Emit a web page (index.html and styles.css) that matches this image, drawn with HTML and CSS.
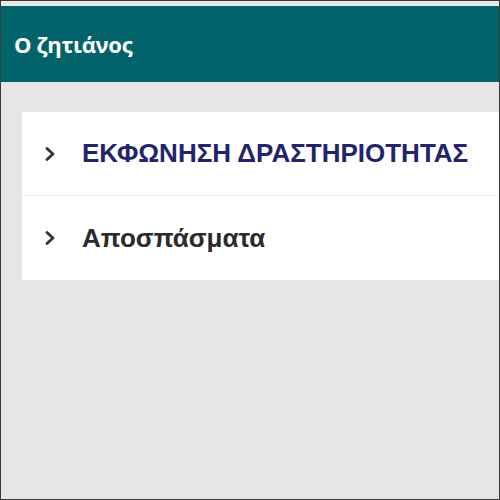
FILE: index.html
```html
<!DOCTYPE html>
<html lang="el">
<head>
<meta charset="utf-8">
<link rel="stylesheet" href="styles.css">
</head>
<body>
<div class="frame">
  <div class="topstrip"></div>
  <header class="header"><h1 class="title">Ο ζητιάνος</h1></header>
  <main class="content">
    <div class="card">
      <div class="row row-first">
        <svg class="chev" width="10" height="16" viewBox="0 0 10 16"><path d="M2 2.5 L8 8 L2 13.5" fill="none" stroke="#333" stroke-width="2.8" stroke-linecap="round" stroke-linejoin="round"/></svg>
        <span class="label label-task">ΕΚΦΩΝΗΣΗ ΔΡΑΣΤΗΡΙΟΤΗΤΑΣ</span>
      </div>
      <div class="row">
        <svg class="chev" width="10" height="16" viewBox="0 0 10 16"><path d="M2 2.5 L8 8 L2 13.5" fill="none" stroke="#333" stroke-width="2.8" stroke-linecap="round" stroke-linejoin="round"/></svg>
        <span class="label">Αποσπάσματα</span>
      </div>
    </div>
  </main>
</div>
</body>
</html>
```

FILE: styles.css
```css
html, body {
  margin: 0;
  padding: 0;
}
.frame {
  width: 500px;
  height: 500px;
  box-sizing: border-box;
  border: 1px solid #3a3a3a;
  background: #e6e6e6;
  display: flex;
  flex-direction: column;
  overflow: hidden;
}
.topstrip {
  height: 5px;
  background: #e8e8e8;
}
.header {
  height: 76px;
  background: #02636b;
  display: flex;
  align-items: center;
  padding-left: 13px;
}
.title {
  margin: 0;
  color: #fff;
  font-family: "Open Sans", "DejaVu Sans", sans-serif;
  font-weight: 700;
  font-size: 22px;
  letter-spacing: -0.3px;
}
.content {
  flex: 1;
  padding: 30px 0 0 21px;
}
.card {
  background: #fff;
  margin-right: -4px;
}
.row {
  height: 84px;
  display: flex;
  align-items: center;
  padding-left: 23px;
  box-sizing: border-box;
}
.row-first {
  border-bottom: 1px solid #efefef;
}
.chev {
  flex: none;
  margin-right: 27px;
}
.label {
  font-family: "Liberation Sans", Arial, sans-serif;
  font-weight: 700;
  font-size: 26px;
  color: #2b2b2b;
}
.label-task {
  color: #24246a;
}
```
